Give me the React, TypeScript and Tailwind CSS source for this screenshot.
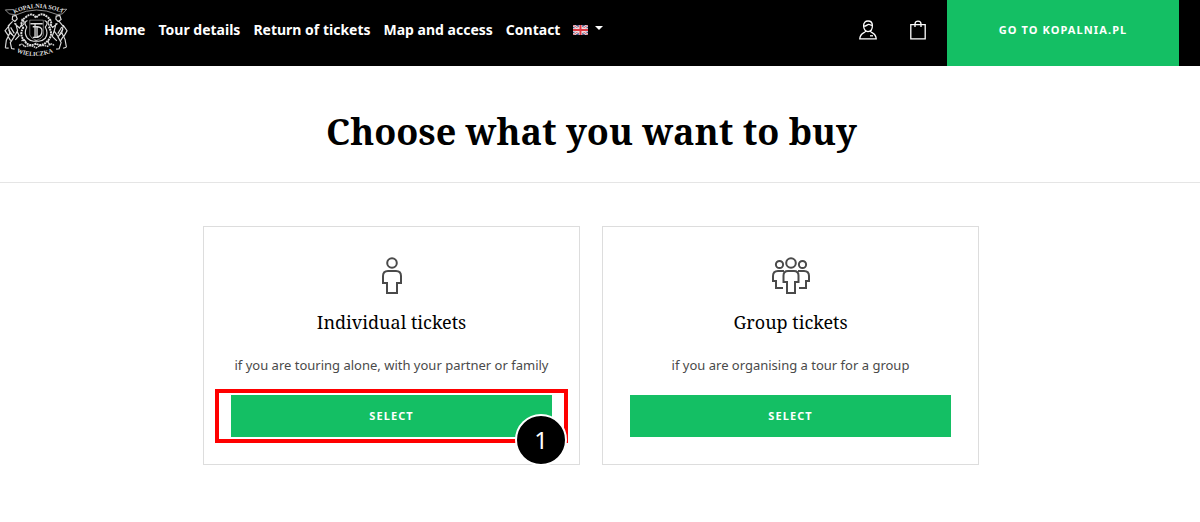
import type { ReactNode } from "react";

const navLinks = [
  { id: 1, label: "Home" },
  { id: 2, label: "Tour details" },
  { id: 3, label: "Return of tickets" },
  { id: 4, label: "Map and access" },
  { id: 5, label: "Contact" },
];

const Logo = () => (
  <svg
    viewBox="0 0 240 200"
    className="h-[66px] w-20"
    fill="none"
    stroke="#dcdcdc"
    strokeWidth="3.5"
    aria-label="Kopalnia Soli Wieliczka"
  >
    <defs>
      <path id="logo-top" d="M42 42 Q111 8 190 40" />
      <path id="logo-bottom" d="M49 158 Q108 184 174 152" />
    </defs>
    <g
      fill="#dcdcdc"
      stroke="none"
      fontFamily="Liberation Serif, serif"
      fontWeight="bold"
      fontSize="19"
    >
      <text>
        <textPath href="#logo-top">KOPALNIA SOLI</textPath>
      </text>
      <text>
        <textPath href="#logo-bottom">WIELICZKA</textPath>
      </text>
    </g>
    {/* ribbon */}
    <path d="M40 29 L15 30 L27 42 L48 45 Q108 16 172 44 L188 42 L201 28 L180 29" strokeWidth="2" />
    {/* wreath */}
    <path
      d="M76 53 Q96 34 108 54 Q122 34 143 52 Q162 66 148 84 Q161 106 143 124 Q126 144 108 132 Q88 144 73 124 Q56 106 69 84 Q56 66 76 53Z"
      strokeWidth="6"
      strokeDasharray="6 2"
    />
    <path d="M82 62 Q68 68 80 82 Q70 100 82 116 Q94 128 108 124 Q124 128 136 116 Q146 100 136 82 Q148 68 134 62" />
    <path d="M64 58 Q76 64 70 76 M151 58 Q139 65 148 78 M64 124 Q76 115 78 132 M148 119 Q140 130 152 136" />
    {/* shield with monogram */}
    <path d="M89 61 H130 V106 Q126 118 109 122 Q92 117 89 106Z" strokeWidth="1.5" />
    <path d="M91 72 H128 M98 81 H113 M105 73 V113 M111 80 V113 M113 81 Q130 83 125 101 Q122 111 112 112 M98 113 H116" strokeWidth="4" />
    {/* left figure */}
    <path d="M37 49 L47 47 L51 57 L44 65 L36 59Z M37 65 L24 78 L28 99 L42 111 L52 93 L46 70 M42 71 L58 85 L66 71 M29 99 L18 122 L15 145 M42 111 L30 129 L34 147 L43 149 M15 145 L25 146 M28 76 L14 93 L24 108 M50 94 L57 108 L45 121" />
    <path d="M31 83 L42 101 M25 90 L37 106 M24 112 L31 123" />
    {/* right figure */}
    <path d="M169 49 L180 47 L184 59 L175 65 L168 58Z M178 65 L190 79 L186 99 L175 111 L163 94 L169 70 M173 71 L158 83 L150 72 M186 99 L196 120 L200 143 M174 111 L184 129 L178 148 L169 149 M200 143 L190 146 M190 76 L202 93 L192 111 M163 94 L157 110 L171 124" />
    <path d="M186 82 L174 102 M190 88 L178 106 M190 111 L182 124" />
    <path d="M57 138 Q66 128 73 142 Q92 134 108 145 Q127 133 143 141 Q153 127 163 138" strokeWidth="4" strokeDasharray="5 2" />
  </svg>
);

const FlagIcon = () => (
  <svg viewBox="0 0 30 20" className="h-[10px] w-[15px]" preserveAspectRatio="none">
    <rect width="30" height="20" fill="#4a5585" />
    <path d="M0 0 L30 20 M30 0 L0 20" stroke="#eee4e8" strokeWidth="5" />
    <path d="M0 0 L30 20 M30 0 L0 20" stroke="#d9606c" strokeWidth="2" />
    <path d="M15 0 V20 M0 10 H30" stroke="#f5eeee" strokeWidth="7" />
    <path d="M15 0 V20 M0 10 H30" stroke="#dc3540" strokeWidth="4" />
  </svg>
);

const UserIcon = () => (
  <svg viewBox="0 0 18 20" className="h-5 w-[18px]" fill="none" stroke="white" strokeWidth="1.3">
    <path d="M4.6 5.5 C4.6 2.6 6.4 1 9 1 C11.6 1 13.4 2.6 13.4 5.5 C13.4 9 11.7 11.6 9 11.6 C6.3 11.6 4.6 9 4.6 5.5Z" />
    <path d="M4.6 6.2 C7.3 6.4 8.2 4.5 9.6 4.4 C10.8 4.3 11.6 5.5 13.3 5.2" />
    <path d="M6.8 11 C6.5 13 1 12.500 .8 18.8 H17.2 C17 12.500 11.500 13 11.2 11" />
    <path d="M11 15.8 H14" />
  </svg>
);

const BagIcon = () => (
  <svg viewBox="0 0 16 20" className="h-5 w-4" fill="none" stroke="white" strokeWidth="1.3">
    <path d="M.8 4.6 H15.2 V18.8 H.8Z" />
    <path d="M5 7 V4 C5 .1 11 .1 11 4 V7" />
  </svg>
);

const PersonIcon = () => (
  <svg viewBox="0 0 20 38" className="h-[38px] w-5" fill="none" stroke="#4a4a4a" strokeWidth="2">
    <circle cx="10" cy="6" r="4.8" />
    <path d="M6 14 H14 Q19 14 19 19 V26 H15 V36 H5 V26 H1 V19 Q1 14 6 14Z" />
  </svg>
);

const GroupIcon = () => (
  <svg viewBox="0 0 38 38" className="h-[38px] w-[38px]" fill="none" stroke="#4a4a4a" strokeWidth="2">
    <circle cx="19" cy="6" r="4.8" />
    <circle cx="7.5" cy="7.5" r="3.6" />
    <circle cx="30.5" cy="7.5" r="3.6" />
    <path d="M16 14 H22 Q26.5 14 26.5 18.5 V25 H23 V36 H15 V25 H11.5 V18.5 Q11.5 14 16 14Z" />
    <path d="M12 14 H6 Q1 14 1 19 V24 H4 V31 H11" />
    <path d="M26 14 H32 Q37 14 37 19 V24 H34 V31 H27" />
  </svg>
);

type TicketCardProps = {
  title: string;
  text: string;
  icon: ReactNode;
  step?: number;
};

const TicketCard = ({ title, text, icon, step }: TicketCardProps) => {
  return (
    <article className="flex-1 border border-[#dddddd] px-[27px] pt-[30px] pb-[27px] text-center">
      <div className="flex justify-center">{icon}</div>
      <h2 className="mt-[11px] font-['Noto_Serif','DejaVu_Serif_Condensed','DejaVu_Serif',serif] text-lg leading-8 text-black">
        {title}
      </h2>
      <p className="mt-[15px] mb-[18px] text-[13px] leading-6 text-[#4a4a4a]">{text}</p>
      <div className="relative">
        <button
          type="button"
          className="block h-[42px] w-full cursor-pointer bg-[#14bf64] text-[11px] font-bold tracking-widest text-white"
        >
          SELECT
        </button>
        {/* highlighted step */}
        {step && (
          <>
            <span className="pointer-events-none absolute -inset-x-4 -inset-y-1.5 border-4 border-[#ff0000]" />
            <span className="absolute -right-[15px] -bottom-[29px] flex size-[52px] items-center justify-center rounded-full border-2 border-white bg-black text-2xl text-white">
              {step}
            </span>
          </>
        )}
      </div>
    </article>
  );
};

const Header = () => {
  return (
    <header className="flex h-[66px] items-center bg-black pr-[21px] text-white">
      <a href="#">
        <Logo />
      </a>
      <nav className="ml-6 flex items-center gap-[13px] pb-1.5 text-sm font-bold">
        {navLinks.map((link) => (
          <a key={link.id} href="#">
            {link.label}
          </a>
        ))}
        <button type="button" aria-label="Language" className="flex items-center gap-[7px]">
          <FlagIcon />
          <svg viewBox="0 0 8 4" className="mb-1 h-1 w-2" fill="white">
            <path d="M0 0 H8 L4 4Z" />
          </svg>
        </button>
      </nav>
      <div className="ml-auto flex items-center gap-[33px] pr-[21px] pb-1.5">
        <a href="#" aria-label="Account">
          <UserIcon />
        </a>
        <a href="#" aria-label="Basket">
          <BagIcon />
        </a>
      </div>
      <a
        href="#"
        className="flex h-full w-[232px] items-center justify-center bg-[#14bf64] pb-1.5 text-[11px] font-bold tracking-widest"
      >
        GO TO KOPALNIA.PL
      </a>
    </header>
  );
};

const App = () => {
  return (
    <div className="min-h-screen bg-white font-['Noto_Sans',sans-serif]">
      <Header />
      <main>
        <div className="border-b border-[#e5e5e5] pt-10 pr-[17px] pb-6">
          <h1 className="text-center font-['Noto_Serif','DejaVu_Serif_Condensed','DejaVu_Serif',serif] text-4xl leading-[52px] font-bold text-black">
            Choose what you want to buy
          </h1>
        </div>
        <div className="pt-[43px] pr-[18px]">
          <section className="mx-auto flex max-w-[776px] gap-[22px]">
            <TicketCard
              title="Individual tickets"
              text="if you are touring alone, with your partner or family"
              icon={<PersonIcon />}
              step={1}
            />
            <TicketCard
              title="Group tickets"
              text="if you are organising a tour for a group"
              icon={<GroupIcon />}
            />
          </section>
        </div>
      </main>
    </div>
  );
};

export default App;
